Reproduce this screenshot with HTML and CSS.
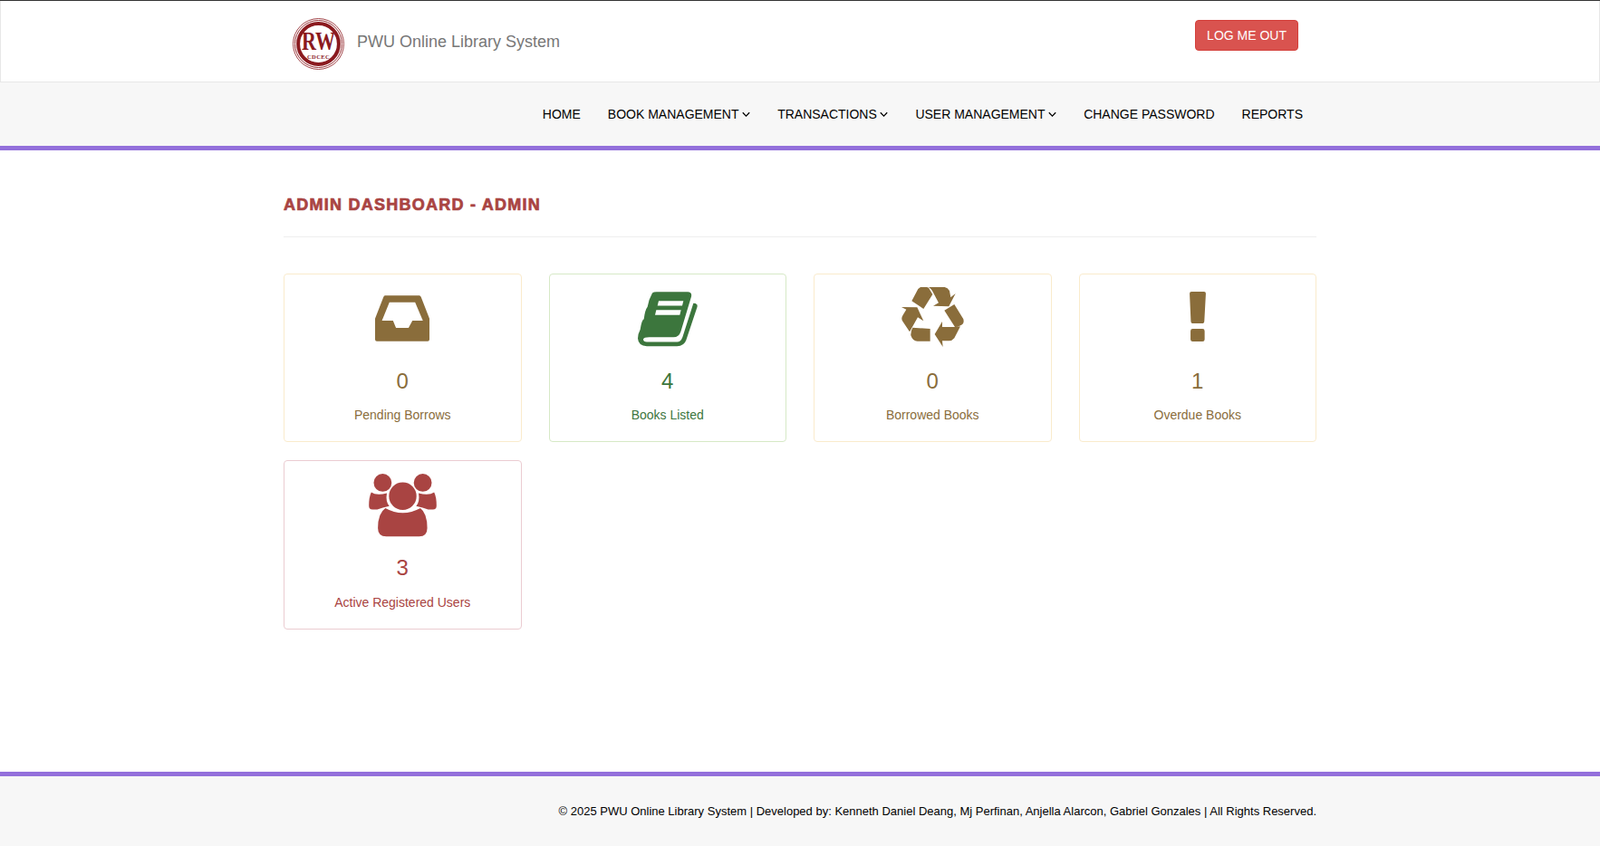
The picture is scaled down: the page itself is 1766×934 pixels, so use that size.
FILE: index.html
```html
<!DOCTYPE html>
<html lang="en">
<head>
<meta charset="utf-8">
<title>PWU Online Library System</title>
<link rel="stylesheet" href="styles.css">
</head>
<body>
<header class="topbar">
  <div class="container topbar-inner">
    <a class="brand" href="#">
      <svg class="logo" viewBox="0 0 57 57" aria-hidden="true">
        <circle cx="28.5" cy="28.5" r="28" fill="none" stroke="#8b1a1f" stroke-width="0.8"/>
        <circle cx="28.5" cy="28.5" r="26" fill="none" stroke="#8b1a1f" stroke-width="0.9"/>
        <circle cx="28.5" cy="28.5" r="22.4" fill="none" stroke="#8b1a1f" stroke-width="4"/>
        <text class="logo-main" transform="translate(28.5 35) scale(.76 1)" text-anchor="middle">RW</text>
        <text class="logo-sub" transform="translate(28.5 44.5)" text-anchor="middle">CDCEC</text>
      </svg>
      <span class="brand-text">PWU Online Library System</span>
    </a>
    <a class="logout" href="#">LOG ME OUT</a>
  </div>
</header>

<nav class="mainnav">
  <div class="container">
    <ul class="navlist">
      <li><a href="#">HOME</a></li>
      <li><a href="#">BOOK MANAGEMENT<svg class="caret" viewBox="0 0 8 6"><path d="M.7 1 4 4.4 7.3 1"/></svg></a></li>
      <li><a href="#">TRANSACTIONS<svg class="caret" viewBox="0 0 8 6"><path d="M.7 1 4 4.4 7.3 1"/></svg></a></li>
      <li><a href="#">USER MANAGEMENT<svg class="caret" viewBox="0 0 8 6"><path d="M.7 1 4 4.4 7.3 1"/></svg></a></li>
      <li><a href="#">CHANGE PASSWORD</a></li>
      <li><a href="#">REPORTS</a></li>
    </ul>
  </div>
</nav>

<main class="content">
  <div class="container">
    <h1 class="page-title">ADMIN DASHBOARD - ADMIN</h1>
    <div class="cards">
      <div class="card warning">
        <div class="icon-slot">
          <svg class="icon i-inbox" viewBox="0 0 182 153"><path fill-rule="evenodd" d="M33 0H148Q152 0 154 5L182 77V147Q182 153 176 153H6Q0 153 0 147V77L28 5Q30 0 33 0ZM48 23 23 84H60L70 108H112L125 84H160L134 23Z"/></svg>
        </div>
        <div class="num">0</div>
        <div class="label">Pending Borrows</div>
      </div>
      <div class="card success">
        <div class="icon-slot">
          <svg class="icon i-book" viewBox="0 0 198 182"><path d="M48 4Q52 0 62 0H165Q180 0 177 16L142 132Q136 150 118 150H38Q20 150 18 157Q18 166 30 166H130Q142 166 148 150L184 38Q192 38 196 42Q198 46 196 52L160 160Q153 180 130 180H30Q2 180 0 155Q0 140 8 125Q12 95 20 90Q24 60 32 50Q36 25 48 4Z"/><path class="cut" d="M69 30H151L147 46H65ZM61 60H143L139 77H57Z"/></svg>
        </div>
        <div class="num">4</div>
        <div class="label">Books Listed</div>
      </div>
      <div class="card warning">
        <div class="icon-slot">
          <svg class="icon i-recycle" viewBox="315 66 207 198"><path d="M378 66Q396 64 405 68L418 90 388 138 349 112 370 72ZM405 66H458Q468 68 474 78L478 100 494 87 472 130 420 128 438 118 422 88Q415 72 405 66ZM490 123 520 172Q524 186 512 192 504 198 492 198L457 143ZM510 196 490 235Q482 245 470 244H450L452 264 425 222 450 180V198H490Q503 198 510 196ZM352 200 410 204V245H368Q352 245 346 226 345 212 352 200ZM315 132 367 133 388 178 369 166 342 214 318 178Q313 168 320 158L331 140Z"/></svg>
        </div>
        <div class="num">0</div>
        <div class="label">Borrowed Books</div>
      </div>
      <div class="card warning">
        <div class="icon-slot">
          <svg class="icon i-excl" viewBox="339 80 54 166"><path d="M345 80H387Q393 80 393 86L388 177Q388 186 380 186H351Q343 186 343 177L339 86Q339 80 345 80ZM349 204H382Q389 204 389 211V239Q389 246 382 246H349Q342 246 342 239V211Q342 204 349 204Z"/></svg>
        </div>
        <div class="num">1</div>
        <div class="label">Overdue Books</div>
      </div>
      <div class="card danger">
        <div class="icon-slot">
          <svg class="icon i-users" viewBox="290 68 226 212"><circle cx="336" cy="98" r="30"/><circle cx="470" cy="98" r="30"/><circle cx="403" cy="143" r="46"/><path d="M345 183Q403 215 462 183 485 200 485 250 485 278 458 278H348Q320 278 320 250 320 200 345 183Z"/><path d="M298 130Q315 142 350 133 345 160 358 176 335 180 318 188H302Q290 188 290 175 290 145 298 130ZM508 130Q491 142 456 133 461 160 448 176 471 180 488 188H504Q516 188 516 175 516 145 508 130Z"/></svg>
        </div>
        <div class="num">3</div>
        <div class="label">Active Registered Users</div>
      </div>
    </div>
  </div>
</main>

<footer class="footer">
  <div class="container">
    <p class="copy">© 2025 PWU Online Library System | Developed by: Kenneth Daniel Deang, Mj Perfinan, Anjella Alarcon, Gabriel Gonzales | All Rights Reserved.</p>
  </div>
</footer>
</body>
</html>
```

FILE: styles.css
```css
* { box-sizing: border-box; }
html, body { margin: 0; padding: 0; }
body {
  font-family: "Liberation Sans", Arial, sans-serif;
  font-size: 14px;
  line-height: 20px;
  color: #333;
  background: #fff;
  min-height: 934px;
  display: flex;
  flex-direction: column;
  border-top: 1px solid #333;
}
a { text-decoration: none; }
.container {
  width: 1170px;
  margin: 0 auto;
  padding: 0 15px;
}
.topbar {
  height: 90px;
  background: #fff;
  border: 1px solid #e7e7e7;
  border-top: 0;
}
.topbar-inner {
  display: flex;
  justify-content: space-between;
  align-items: flex-start;
}
.brand {
  display: flex;
  align-items: center;
  margin-left: 10px;
  margin-top: 19px;
}
.logo { width: 57px; height: 57px; display: block; overflow: visible; }
.logo-main { font: 700 29px "Liberation Serif", serif; fill: #8b1a1f; }
.logo-sub { font: 700 6.5px "Liberation Serif", serif; letter-spacing: .4px; fill: #8b1a1f; }
.brand-text {
  margin-left: 14px;
  margin-bottom: 5px;
  font-size: 18px;
  color: #777;
}
.logout {
  margin-top: 21px;
  margin-right: 20px;
  padding: 6px 12px;
  height: 34px;
  background: #d9534f;
  border: 1px solid #d43f3a;
  border-radius: 4px;
  color: #fff;
}
.mainnav {
  height: 75px;
  background: #f7f7f7;
  border-bottom: 5px solid #9370db;
}
.navlist {
  list-style: none;
  margin: 0;
  padding: 0;
  display: flex;
  justify-content: flex-end;
}
.navlist a {
  display: flex;
  align-items: center;
  padding: 25px 15px;
  color: #000;
}
.caret {
  width: 9px;
  height: 7px;
  margin-left: 3.6px;
  margin-top: 1px;
  fill: none;
  stroke: #000;
  stroke-width: 1.1;
}
.content { flex: 1; }
.page-title {
  margin: 0 0 40px;
  padding: 50px 0 25px;
  border-bottom: 1px solid #eee;
  font-size: 18px;
  line-height: 20px;
  font-weight: 700;
  letter-spacing: 1.25px;
  color: #a94442;
  -webkit-text-stroke: .7px #a94442;
}
.cards {
  display: grid;
  grid-template-columns: repeat(4, 1fr);
  column-gap: 30px;
  row-gap: 20px;
}
.card {
  height: 186px;
  border: 1px solid;
  border-radius: 4px;
  padding-top: 14px;
  text-align: center;
  background: #fff;
}
.warning { border-color: #faebcc; color: #8a6d3b; }
.success { border-color: #d6e9c6; color: #3c763d; }
.danger { border-color: #ebccd1; color: #a94442; height: 187px; }
.icon-slot {
  height: 70px;
  display: flex;
  align-items: center;
  justify-content: center;
}
.icon { display: block; fill: currentColor; }
.icon .cut { fill: #fff; }
.i-inbox { width: 60px; height: 51px; margin-top: -1px; }
.i-book { width: 66px; height: 61px; margin-top: 1px; }
.i-recycle { width: 69px; height: 66px; margin-top: -4px; }
.i-excl { width: 18px; height: 55px; margin-top: -5px; }
.i-users { width: 75px; height: 70px; }
.num {
  margin-top: 21px;
  font-size: 24px;
  line-height: 26px;
}
.label { margin-top: 14px; }
.danger .label { margin-top: 15px; }
.footer {
  height: 82px;
  background: #f7f7f7;
  border-top: 5px solid #9370db;
}
.copy {
  margin: 0;
  padding-top: 29px;
  font-size: 13px;
  text-align: right;
  color: #000;
}
```
